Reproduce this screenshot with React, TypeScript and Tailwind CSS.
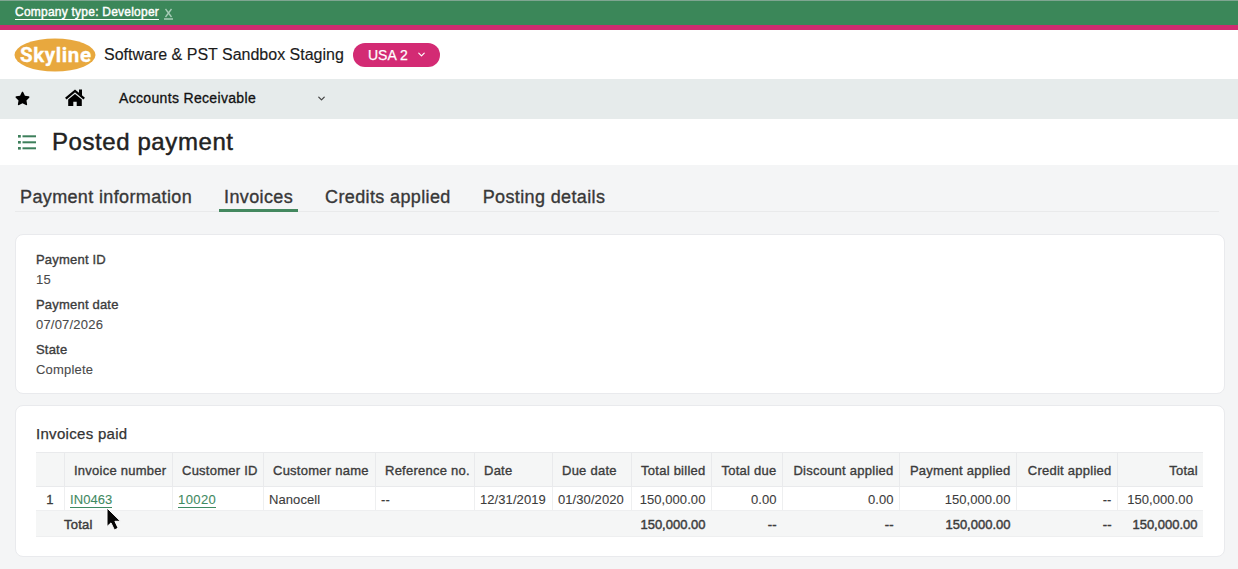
import React from "react";
import clsx from "clsx";
import { FaStar } from "react-icons/fa";
import { ChevronDown } from "lucide-react";

const tabs = [
  { label: "Payment information", active: false },
  { label: "Invoices", active: true },
  { label: "Credits applied", active: false },
  { label: "Posting details", active: false },
];

const details = [
  { label: "Payment ID", value: "15" },
  { label: "Payment date", value: "07/07/2026" },
  { label: "State", value: "Complete" },
];

type Column = {
  title: string;
  width: number;
  value: string;
  total?: string;
  right?: boolean;
  link?: boolean;
};

const columns: Column[] = [
  { title: "Invoice number", width: 108, value: "IN0463", link: true },
  { title: "Customer ID", width: 91, value: "10020", link: true },
  { title: "Customer name", width: 112, value: "Nanocell" },
  { title: "Reference no.", width: 99, value: "--" },
  { title: "Date", width: 78, value: "12/31/2019" },
  { title: "Due date", width: 79, value: "01/30/2020" },
  { title: "Total billed", width: 80, value: "150,000.00", total: "150,000.00", right: true },
  { title: "Total due", width: 71, value: "0.00", total: "--", right: true },
  { title: "Discount applied", width: 117, value: "0.00", total: "--", right: true },
  { title: "Payment applied", width: 117, value: "150,000.00", total: "150,000.00", right: true },
  { title: "Credit applied", width: 101, value: "--", total: "--", right: true },
  { title: "Total", width: 86, value: "150,000.00", total: "150,000.00", right: true },
];

const Logo = () => (
  <svg width="82" height="34" viewBox="0 0 82 34" className="shrink-0">
    <ellipse cx="41" cy="17" rx="40.5" ry="16.5" fill="#e8a83e" />
    <text
      x="6"
      y="23.5"
      textLength="71"
      lengthAdjust="spacing"
      fill="#fff"
      stroke="#fff"
      strokeWidth="0.3"
      fontFamily="Roboto, sans-serif"
      fontWeight="700"
      fontSize="20.5"
    >
      Skyline
    </text>
  </svg>
);

const HomeIcon = () => (
  <svg width="20" height="18" viewBox="0 0 20 18" className="ml-[35px]">
    <path d="M0.8 9.6 10 1.9l9.2 7.7" fill="none" stroke="#000" strokeWidth="2.3" />
    <path d="M14 0.5h3v6.5l-3-2.5zM3.2 10.6 10 4.9l6.8 5.7V17h-5.1v-4.2H8.3V17H3.2z" />
  </svg>
);

const Header = () => (
  <header>
    <div className="flex h-[25px] items-center border-t border-[#7fa591] bg-[#3b8759] pl-[15px] text-xs text-white">
      <span className="border-b border-white leading-[13px] tracking-[0.23px] [-webkit-text-stroke:0.4px]">
        Company type: Developer
      </span>
      <svg width="9" height="13" viewBox="0 0 9 13" className="ml-[5px] mt-px" stroke="#a9cdb8" fill="none">
        <path d="M1.5 2 7.5 10M7.5 2 1.5 10M0 12H9" strokeWidth="1.3" />
      </svg>
    </div>
    <div className="h-[5px] bg-[#cf2c70]" />
    <div className="flex h-[49px] items-center bg-white pl-[14px]">
      <Logo />
      <span className="ml-2 w-[249px] pt-px text-base text-[#1b1b1b] [-webkit-text-stroke:0.15px]">
        Software &amp; PST Sandbox Staging
      </span>
      <button className="flex h-6 w-[87px] items-center rounded-full bg-[#d32b74] pl-[15px] text-sm text-white [-webkit-text-stroke:0.25px]">
        USA 2
        <ChevronDown size={11} strokeWidth={2.6} className="ml-[8px]" />
      </button>
    </div>
    <nav className="flex h-10 items-center bg-[#e6ebeb] pb-0.5 pl-[15px] text-black">
      <FaStar size={15} />
      <HomeIcon />
      <span className="ml-[34px] w-[197px] text-sm tracking-[0.33px] text-[#111] [-webkit-text-stroke:0.3px]">
        Accounts Receivable
      </span>
      <ChevronDown size={11} strokeWidth={2.8} className="text-[#444]" />
    </nav>
  </header>
);

const TitleBar = () => (
  <div className="flex h-[46px] items-center bg-white pl-[18px]">
    <svg width="18" height="15" viewBox="0 0 18 15" fill="#3d7f5b">
      {[0, 6, 12].map((y) => (
        <g key={y}>
          <rect x="0" y={y} width="2.8" height="2.6" />
          <rect x="4.5" y={y + 0.3} width="13.5" height="2" />
        </g>
      ))}
    </svg>
    <h1 className="ml-4 text-2xl tracking-[0.58px] text-[#222] [-webkit-text-stroke:0.45px]">
      Posted payment
    </h1>
  </div>
);

const Tabs = () => (
  <div className="ml-[15px] mr-[19px] flex h-[47px] items-end gap-[22px] border-b border-[#e9eaeb]">
    {tabs.map((tab) => (
      <div
        key={tab.label}
        className={clsx(
          "-mb-px h-[30px] border-b-3 px-[5px] text-lg leading-[31px] tracking-[0.37px] whitespace-nowrap text-[#383838] [-webkit-text-stroke:0.35px]",
          tab.active ? "border-[#43885f]" : "border-transparent"
        )}
      >
        {tab.label}
      </div>
    ))}
  </div>
);

const Cursor = () => (
  <svg width="17" height="26" viewBox="0 0 17 26" className="absolute top-[506px] left-[105px]">
    <path
      d="M2 2V20.5l4-3.6 3.4 7 3.8-1.7-3.3-6.9h5.6z"
      fill="#050505"
      stroke="#fff"
      strokeWidth="1"
    />
  </svg>
);

const InvoiceTable = () => (
  <table className="w-[1167px] table-fixed border-collapse text-[13px] leading-4 whitespace-nowrap text-[#3c3c3c]">
    <colgroup>
      <col style={{ width: 28 }} />
      {columns.map((col) => (
        <col key={col.title} style={{ width: col.width }} />
      ))}
    </colgroup>
    <thead>
      <tr className="h-[34px] border-y border-[#e9eaec] bg-[#f5f6f6]">
        <th />
        {columns.map((col) => (
          <th
            key={col.title}
            className={clsx(
              "border-l border-[#e9eaec] p-0 pt-[3px] font-normal tracking-[0.25px] [-webkit-text-stroke:0.35px]",
              col.right ? "pr-[5px] text-right" : "pl-[9.5px] text-left"
            )}
          >
            {col.title}
          </th>
        ))}
      </tr>
    </thead>
    <tbody>
      <tr className="h-6 [-webkit-text-stroke:0.1px]">
        <td className="p-0 pt-0.5 text-center [-webkit-text-stroke:0.3px]">1</td>
        {columns.map((col, i) => (
          <td
            key={col.title}
            className={clsx(
              "border-l border-[#eeeff0] p-0 pt-0.5 tracking-[0.08px]",
              col.right ? "text-right" : "pl-[5.5px]",
              col.right && (i === columns.length - 1 ? "pr-[10px]" : "pr-[5px]")
            )}
          >
            {col.link ? (
              <a
                className={clsx(
                  "border-b border-[#3f8a62] text-[#3f8a62]",
                  i === 1 && "tracking-[0.4px]"
                )}
              >
                {col.value}
              </a>
            ) : (
              col.value
            )}
          </td>
        ))}
      </tr>
    </tbody>
    <tfoot>
      <tr className="h-[26px] border-y border-[#eeeff0] bg-[#f5f6f6] [-webkit-text-stroke:0.45px]">
        <td />
        {columns.map((col, i) => (
          <td
            key={col.title}
            className={clsx("p-0 pt-0.5", i > 0 ? "pr-[5.5px] text-right" : "tracking-[0.25px]")}
          >
            {i === 0 ? "Total" : col.total}
          </td>
        ))}
      </tr>
    </tfoot>
  </table>
);

const App = () => {
  return (
    <div className="relative h-[569px] w-[1238px] overflow-hidden bg-[#f4f5f6] font-['Liberation_Sans',Arial,sans-serif]">
      <Header />
      <TitleBar />
      <Tabs />
      <main className="mt-[22px] ml-[15px] flex w-[1210px] flex-col gap-[11px]">
        <section className="h-[160px] rounded-lg border border-[#e9eaed] bg-white pt-[15px] pl-5 text-[13px] text-[#3c3c3c]">
          <dl className="flex flex-col gap-[6px]">
            {details.map((item) => (
              <div key={item.label} className="tracking-[0.2px]">
                <dt className="leading-5 [-webkit-text-stroke:0.35px]">{item.label}</dt>
                <dd className="leading-[19px] text-[#4a4a4a] [-webkit-text-stroke:0.1px]">{item.value}</dd>
              </div>
            ))}
          </dl>
        </section>
        <section className="h-[152px] rounded-lg border border-[#e9eaed] bg-white pt-[18px] pl-5">
          <h2 className="mb-[8px] text-[15px] leading-5 tracking-[0.3px] text-[#333] [-webkit-text-stroke:0.25px]">
            Invoices paid
          </h2>
          <InvoiceTable />
        </section>
      </main>
      <Cursor />
    </div>
  );
};

export default App;
